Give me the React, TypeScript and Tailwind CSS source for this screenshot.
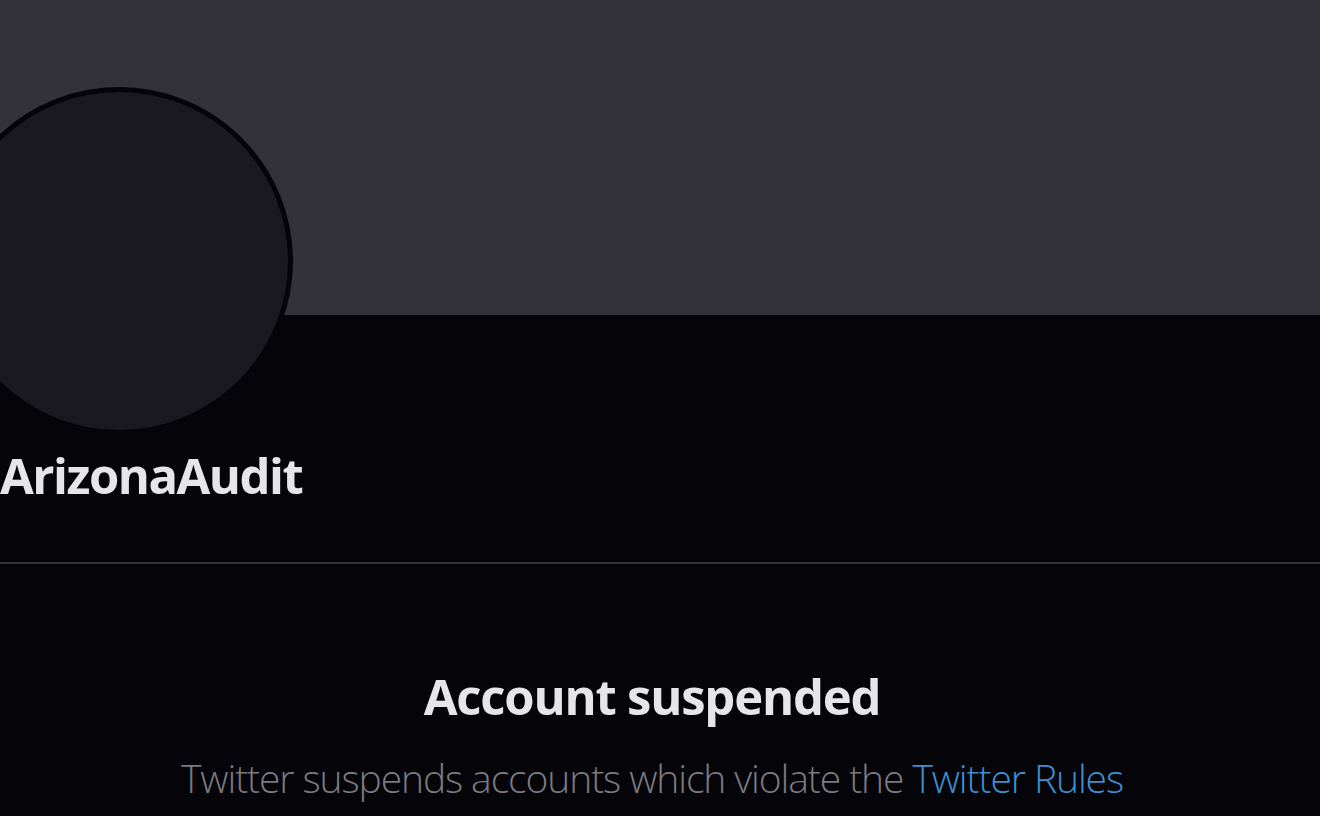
export default function App() {
  return (
    <div
      className="w-[1320px] h-[816px] overflow-hidden bg-[#050408] text-[#e6e6ea]"
      style={{ fontFamily: '"Open Sans", "Noto Sans", sans-serif' }}
    >
      {/* banner */}
      <div className="h-[315px] bg-[#333238]" />

      {/* profile header */}
      <div className="-mt-[228px]">
        <div className="-ml-[55px] w-[348px] h-[348px] rounded-full bg-[#1a191f] border-[5px] border-[#050408]" />
        <h2 className="mt-[10px] text-[49px] font-bold leading-[60px] tracking-[-1.5px]">ArizonaAudit</h2>
      </div>

      <div className="mt-[57px] h-[2px] bg-[#333438]" />

      {/* suspended notice */}
      <div className="flex flex-col items-center pr-[16px]">
        <h1 className="mt-[103px] text-[49px] font-bold leading-[58px] tracking-[-1.2px]">Account suspended</h1>
        <p className="mt-[29px] text-[39px] font-light leading-[48px] tracking-[-1.1px] text-[#7a7b80]">
          Twitter suspends accounts which violate the{' '}
          <span className="text-[#3d8fd0]">Twitter Rules</span>
        </p>
      </div>
    </div>
  );
}
